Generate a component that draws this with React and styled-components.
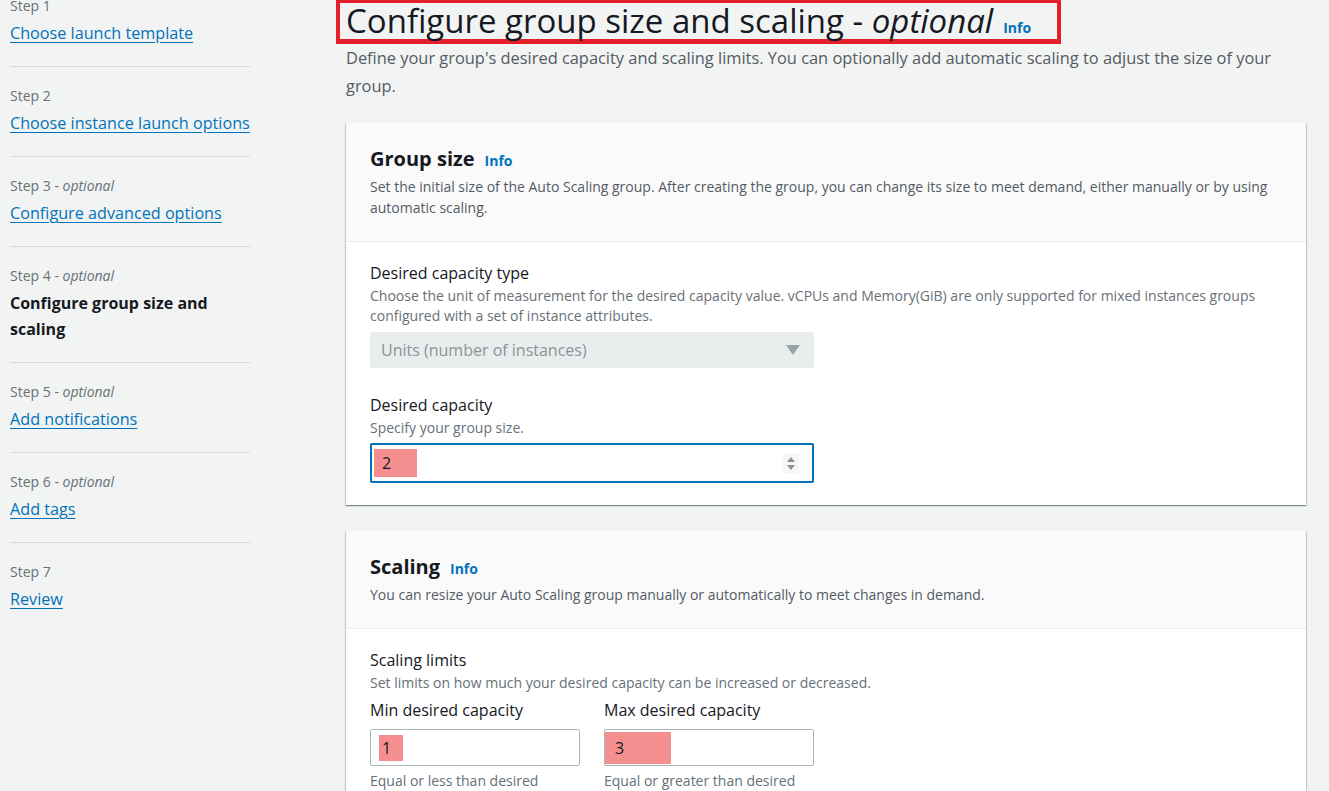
import styled, { createGlobalStyle } from "styled-components";

const GlobalStyle = createGlobalStyle`
  body {
    margin: 0;
    background: #f2f3f3;
    font-family: "Open Sans", "Noto Sans", sans-serif;
    color: #16191f;
    overflow: hidden;
  }
`

const Page = styled.div`
  display: flex;
  align-items: flex-start;
  padding-left: 10px;
`

const Sidebar = styled.nav`
  width: 240px;
  flex-shrink: 0;
  margin-top: -23px;
`

const Step = styled.div`
  padding: 18px 0 22px;
  border-bottom: ${(p) => (p.last ? "none" : "1px solid #d5dbdb")};
  display: flex;
  flex-direction: column;
  gap: 5px;
`

const StepLabel = styled.div`
  font-size: 14px;
  line-height: 22px;
  color: #687078;
  em {
    font-style: italic;
  }
`

const StepLink = styled.a`
  font-size: 16.2px;
  line-height: 22px;
  color: #0073bb;
  text-decoration: underline;
  text-underline-offset: 3px;
  align-self: flex-start;
`

const StepCurrent = styled.div`
  margin: -2px 0 -2px;
  font-size: 16px;
  line-height: 26px;
  font-weight: 700;
  color: #16191f;
`

const Main = styled.main`
  margin-left: 96px;
  width: 960px;
`

const TitleBox = styled.div`
  display: inline-flex;
  align-items: baseline;
  gap: 10px;
  margin-left: -10px;
  padding: 0 26px 0 6px;
  border: 4px solid #e41e2b;
  border-top-width: 3px;
  border-bottom-width: 5px;
`

const Title = styled.h1`
  margin: 0;
  font-size: 33px;
  line-height: 36px;
  font-weight: 400;
  em {
    font-style: italic;
  }
`

const Info = styled.a`
  font-size: 14px;
  font-weight: 700;
  color: #0073bb;
  text-decoration: none;
`

const Lead = styled.p`
  margin: 0 0 23px;
  font-size: 16.4px;
  line-height: 28px;
  color: #545b64;
`

const Card = styled.section`
  background: #fff;
  margin-bottom: 26px;
  box-shadow: 0 1px 1px 0 rgba(0, 28, 36, 0.3), 1px 1px 1px 0 rgba(0, 28, 36, 0.15),
    -1px 1px 1px 0 rgba(0, 28, 36, 0.15);
`

const CardHeader = styled.header`
  background: #fafafa;
  border-bottom: 1px solid #eaeded;
  padding: 22px 24px 23px;
`

const CardTitle = styled.h2`
  margin: 0;
  display: flex;
  align-items: baseline;
  gap: 10px;
  font-size: 20px;
  line-height: 28px;
  font-weight: 700;
`

const CardDesc = styled.p`
  margin: 1px 0 0;
  font-size: 14px;
  line-height: 21px;
  color: #545b64;
`

const CardBody = styled.div`
  padding: 20px 24px 22px;
`

const Field = styled.div`
  display: flex;
  flex-direction: column;
  margin-top: ${(p) => p.top || 0}px;
  width: ${(p) => p.width || "auto"};
`

const Label = styled.label`
  font-size: 16px;
  line-height: 22px;
`

const Hint = styled.div`
  margin-top: ${(p) => p.top || 2}px;
  font-size: 14px;
  line-height: 20px;
  color: #687078;
`

const Select = styled.div`
  margin-top: 6px;
  width: 444px;
  height: 36px;
  box-sizing: border-box;
  border-radius: 2px;
  background: #eaeded;
  display: flex;
  align-items: center;
  justify-content: space-between;
  padding: 0 14px 0 11px;
  font-size: 16px;
  color: #879596;
`

const Caret = styled.span`
  width: 0;
  height: 0;
  border-left: 7px solid transparent;
  border-right: 7px solid transparent;
  border-top: 10px solid #95a5a6;
`

const Input = styled.div`
  margin-top: ${(p) => p.top || 5}px;
  width: ${(p) => p.width}px;
  height: ${(p) => (p.focused ? 40 : 37)}px;
  box-sizing: border-box;
  border: ${(p) => (p.focused ? "2px solid #0073bb" : "1px solid #aab7b8")};
  border-radius: 2px;
  background: #fff;
  display: flex;
  align-items: center;
  justify-content: space-between;
  padding: 0 ${(p) => (p.focused ? 13 : 0)}px 0 ${(p) => p.pad}px;
  font-size: 16px;
`

const Mark = styled.span`
  display: inline-block;
  background: #f58f8f;
  height: ${(p) => p.h || 28}px;
  line-height: ${(p) => p.h || 28}px;
  width: ${(p) => p.w}px;
  padding-left: ${(p) => p.indent}px;
  box-sizing: border-box;
  color: #16191f;
`

const Spinner = styled.span`
  display: flex;
  flex-direction: column;
  align-items: center;
  justify-content: center;
  gap: 3px;
  width: 16px;
  height: 20px;
  background: #f7f7f7;
  &::before,
  &::after {
    content: "";
    width: 0;
    height: 0;
    border-left: 4px solid transparent;
    border-right: 4px solid transparent;
  }
  &::before {
    border-bottom: 5px solid #879596;
  }
  &::after {
    border-top: 5px solid #879596;
  }
`

const Row = styled.div`
  display: flex;
  gap: 24px;
  margin-top: 6px;
`

const steps = [
  { n: "Step 1", link: "Choose launch template" },
  { n: "Step 2", link: "Choose instance launch options" },
  { n: "Step 3", opt: true, link: "Configure advanced options" },
  { n: "Step 4", opt: true, current: "Configure group size and scaling" },
  { n: "Step 5", opt: true, link: "Add notifications" },
  { n: "Step 6", opt: true, link: "Add tags" },
  { n: "Step 7", link: "Review" },
]

const App = () => {
  return (
    <>
      <GlobalStyle />
      <Page>
        <Sidebar>
          {steps.map((s, i) => (
            <Step key={s.n} last={i === steps.length - 1}>
              <StepLabel>
                {s.n}
                {s.opt && (
                  <>
                    {" - "}
                    <em>optional</em>
                  </>
                )}
              </StepLabel>
              {s.current ? (
                <StepCurrent>{s.current}</StepCurrent>
              ) : (
                <StepLink href="#">{s.link}</StepLink>
              )}
            </Step>
          ))}
        </Sidebar>

        <Main>
          <TitleBox>
            <Title>
              Configure group size and scaling - <em>optional</em>
            </Title>
            <Info href="#">Info</Info>
          </TitleBox>
          <Lead>
            Define your group's desired capacity and scaling limits. You can optionally add automatic
            scaling to adjust the size of your group.
          </Lead>

          <Card>
            <CardHeader>
              <CardTitle>
                Group size <Info href="#">Info</Info>
              </CardTitle>
              <CardDesc>
                Set the initial size of the Auto Scaling group. After creating the group, you can change
                its size to meet demand, either manually or by using automatic scaling.
              </CardDesc>
            </CardHeader>
            <CardBody>
              <Field>
                <Label>Desired capacity type</Label>
                <Hint>
                  Choose the unit of measurement for the desired capacity value. vCPUs and Memory(GiB) are
                  only supported for mixed instances groups configured with a set of instance attributes.
                </Hint>
                <Select>
                  Units (number of instances)
                  <Caret />
                </Select>
              </Field>
              <Field top={26}>
                <Label>Desired capacity</Label>
                <Hint>Specify your group size.</Hint>
                <Input focused width={444} pad={2}>
                  <Mark w={43} indent={8}>2</Mark>
                  <Spinner />
                </Input>
              </Field>
            </CardBody>
          </Card>

          <Card>
            <CardHeader>
              <CardTitle>
                Scaling <Info href="#">Info</Info>
              </CardTitle>
              <CardDesc>
                You can resize your Auto Scaling group manually or automatically to meet changes in demand.
              </CardDesc>
            </CardHeader>
            <CardBody>
              <Label>Scaling limits</Label>
              <Hint>Set limits on how much your desired capacity can be increased or decreased.</Hint>
              <Row>
                <Field width="210px">
                  <Label>Min desired capacity</Label>
                  <Input width={210} top={8} pad={8}>
                    <Mark w={24} indent={3} h={26}>1</Mark>
                  </Input>
                  <Hint top={5}>Equal or less than desired</Hint>
                </Field>
                <Field width="210px">
                  <Label>Max desired capacity</Label>
                  <Input width={210} top={8} pad={0}>
                    <Mark w={66} indent={10} h={32}>3</Mark>
                  </Input>
                  <Hint top={5}>Equal or greater than desired</Hint>
                </Field>
              </Row>
            </CardBody>
          </Card>
        </Main>
      </Page>
    </>
  )
}

export default App
